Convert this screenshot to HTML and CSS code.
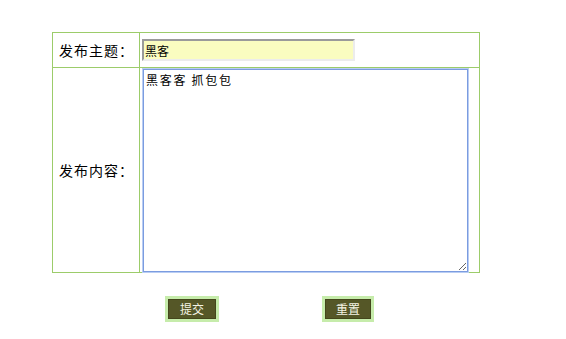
FILE: index.html
```html
<!DOCTYPE html>
<html lang="zh-CN">
<head>
<meta charset="utf-8">
<title>发布</title>
<link rel="stylesheet" href="styles.css">
</head>
<body>
<div class="wrap">
  <form class="form">
    <div class="grid">
      <div class="label">发布主题：</div>
      <div class="field field-title"><input class="title-input" type="text" value="黑客"></div>
      <div class="label label-row2">发布内容：</div>
      <div class="field field-body row2"><textarea class="body-input">黑客客 抓包包</textarea></div>
    </div>
    <div class="actions">
      <button type="button" class="btn">提交</button>
      <button type="button" class="btn btn-reset">重置</button>
    </div>
  </form>
</div>
</body>
</html>
```
FILE: styles.css
```css
html, body {
  margin: 0;
  padding: 0;
  background: #ffffff;
}
body {
  font-family: "Noto Sans CJK SC", "DejaVu Sans", sans-serif;
  color: #000;
}
.wrap {
  padding: 32px 0 0 52px;
}
.grid {
  width: 428px;
  box-sizing: border-box;
  border: 1px solid #9ccc6a;
  display: grid;
  grid-template-columns: 87px 1fr;
  grid-template-rows: 34px 205px;
}
.label {
  display: flex;
  align-items: center;
  padding-left: 6px;
  font-size: 14px;
  letter-spacing: 1px;
  line-height: 16px;
  border-right: 1px solid #9ccc6a;
}
.label-row2, .row2 {
  border-top: 1px solid #9ccc6a;
}
.field {
  display: flex;
  align-items: center;
  padding-left: 2px;
}
.field-body {
  align-items: flex-start;
}
.title-input {
  width: 213px;
  height: 22px;
  box-sizing: border-box;
  margin: 0;
  padding: 1px 1px;
  border-top: 2px solid #9a9a9a;
  border-left: 2px solid #9a9a9a;
  border-right: 2px solid #ececec;
  border-bottom: 2px solid #ececec;
  background: #fafcc0;
  font-family: "Noto Sans CJK SC", sans-serif;
  font-size: 12px;
  outline: none;
}
.body-input {
  margin: 1px 0 0 1px;
  width: 325px;
  height: 203px;
  box-sizing: border-box;
  border: 1px solid #7b9ce0;
  box-shadow: 0 0 0 1px #b9cdf3;
  padding: 2px 2px;
  font-family: "Noto Sans CJK SC", sans-serif;
  font-size: 12px;
  letter-spacing: 1.7px;
  line-height: 15px;
  outline: none;
  background: #fff;
}
.actions {
  display: flex;
  gap: 103px;
  margin: 23px 0 0 113px;
}
.btn {
  height: 26px;
  box-sizing: border-box;
  margin: 0;
  padding: 0 12px;
  border: 3px solid #c6ecab;
  background: #555727;
  box-shadow: inset 0 0 0 1px #44461c;
  color: #f4f4e4;
  font-family: "Noto Sans CJK SC", sans-serif;
  font-size: 12px;
  line-height: 18px;
}
.btn-reset {
  padding: 0 11px;
}
```
